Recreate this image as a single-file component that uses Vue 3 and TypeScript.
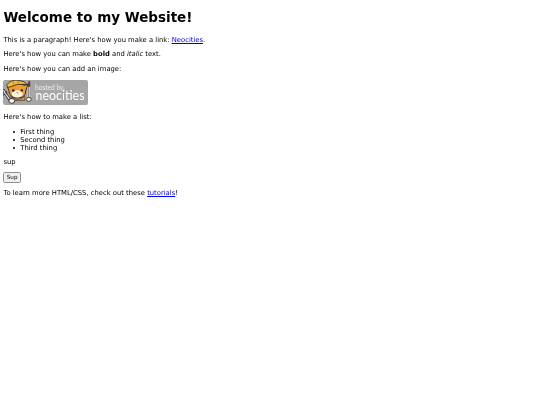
<script setup lang="ts">
const items: string[] = ['First thing', 'Second thing', 'Third thing']
</script>

<template>
  <main class="page">
    <h1>Welcome to my Website!</h1>
    <p>This is a paragraph! Here's how you make a link: <a href="#">Neocities</a>.</p>
    <p>Here's how you can make <strong>bold</strong> and <em>italic</em> text.</p>
    <p>Here's how you can add an image:</p>
    <p class="badge-line">
      <svg class="badge" width="85" height="25" viewBox="0 0 85 25" role="img" aria-label="Hosted by Neocities">
        <rect width="85" height="25" rx="2" fill="#a6a6a6" />
        <g transform="translate(-2.2 -0.6)">
          <!-- wrench -->
          <path d="M3 11 L4 13.5 L7 17.5 L9.5 21" stroke="#2f2f2f" stroke-width="2.8" fill="none" stroke-linecap="round" />
          <path d="M3 11 L4 13.5 L7 17.5 L9.5 21" stroke="#dcdcdc" stroke-width="1.3" fill="none" stroke-linecap="round" />
          <path d="M2 15.5 L4.5 15 M5.5 11.5 L6 14" stroke="#2f2f2f" stroke-width=".9" fill="none" />
          <!-- body and paws -->
          <path d="M10 17 Q17 23 24 17 L24 21 L11 21Z" fill="#e79a3c" stroke="#33261a" stroke-width=".6" />
          <ellipse cx="11" cy="21.5" rx="3" ry="2.4" fill="#fdf8ef" stroke="#2c2219" stroke-width=".9" />
          <!-- head -->
          <path d="M8 11 L6.5 7 L10 6.5 Q17 2 23.5 6 L27 5 L25 11.5 Q25 18.5 16.5 18.5 Q8.5 18.5 8 11Z" fill="#ee9c36" stroke="#2f2318" stroke-width=".9" />
          <!-- hat -->
          <path d="M5.5 6 Q10 -0.5 18 1 Q24 1.5 26 5 Q16 3.5 8 8Z" fill="#f2bb3f" stroke="#2f2318" stroke-width=".8" />
          <path d="M12 2 L13 5 M17 1.5 L17.5 4" stroke="#b56a1d" stroke-width=".9" />
          <!-- face -->
          <ellipse cx="16.5" cy="14.5" rx="5.5" ry="3.6" fill="#fff3dd" />
          <circle cx="12.5" cy="11" r="1.2" fill="#1c1c1c" />
          <circle cx="21" cy="11" r="1.2" fill="#1c1c1c" />
          <path d="M15.5 13 L17.5 13 L16.5 14.2Z" fill="#3a2a1a" />
          <!-- brush -->
          <path d="M28 7 L28 21" stroke="#f4efe4" stroke-width="2.2" />
          <path d="M28 7 L28 21" stroke="#3a2c22" stroke-width=".7" />
          <path d="M26.8 7 Q27 3 28.6 1.5 Q29.6 4 29.2 7Z" fill="#8a2f2c" stroke="#3a2020" stroke-width=".4" />
          <ellipse cx="28" cy="20" rx="2.4" ry="2" fill="#fdf8ef" stroke="#2c2219" stroke-width=".8" />
        </g>
        <text x="32" y="9.6" class="hosted">hosted by,</text>
        <text x="32.6" y="20" class="neo">neocities</text>
      </svg>
    </p>
    <p>Here's how to make a list:</p>
    <ul>
      <li v-for="item in items" :key="item">{{ item }}</li>
    </ul>
    <p class="sup">sup</p>
    <button type="button">Sup</button>
    <p>To learn more HTML/CSS, check out these <a href="#">tutorials</a>!</p>
  </main>
</template>

<style scoped>
.page {
  padding: 0 3.4px;
  overflow: hidden;
  font-family: "DejaVu Sans", sans-serif;
  font-size: 6.8px;
  line-height: 8px;
  color: #000;
  filter: blur(0.25px);
}
h1 {
  margin: 9px 0 10.5px;
  font-size: 13.5px;
  line-height: 16px;
  font-weight: 700;
}
p {
  margin: 6.75px 0;
}
a {
  color: #0000ee;
}
.badge-line {
  height: 26.1px;
}
.badge {
  display: block;
}
.hosted {
  font-family: "Lato", sans-serif;
  font-size: 6.6px;
  fill: #ececec;
}
.neo {
  font-family: "Lato", sans-serif;
  font-size: 12.4px;
  fill: #fff;
}
ul {
  margin: 7.75px 0 0;
  padding: 0 0 0 10.1px;
  list-style: none;
}
.sup {
  margin-top: 5.8px;
}
li {
  display: flex;
  align-items: center;
}
li::before {
  content: "";
  width: 1.9px;
  height: 1.9px;
  margin-right: 4.9px;
  border-radius: 50%;
  background: #000;
}
button {
  display: block;
  margin-top: -1px;
  font-family: "DejaVu Sans", sans-serif;
  font-size: 5.6px;
  line-height: 7px;
  padding: 0.9px 2.4px;
  border: 0.8px solid #8f8f8f;
  border-radius: 1.5px;
  background: #efefef;
  color: #000;
}
</style>
<style>
html, body { background: #fff; }
</style>
